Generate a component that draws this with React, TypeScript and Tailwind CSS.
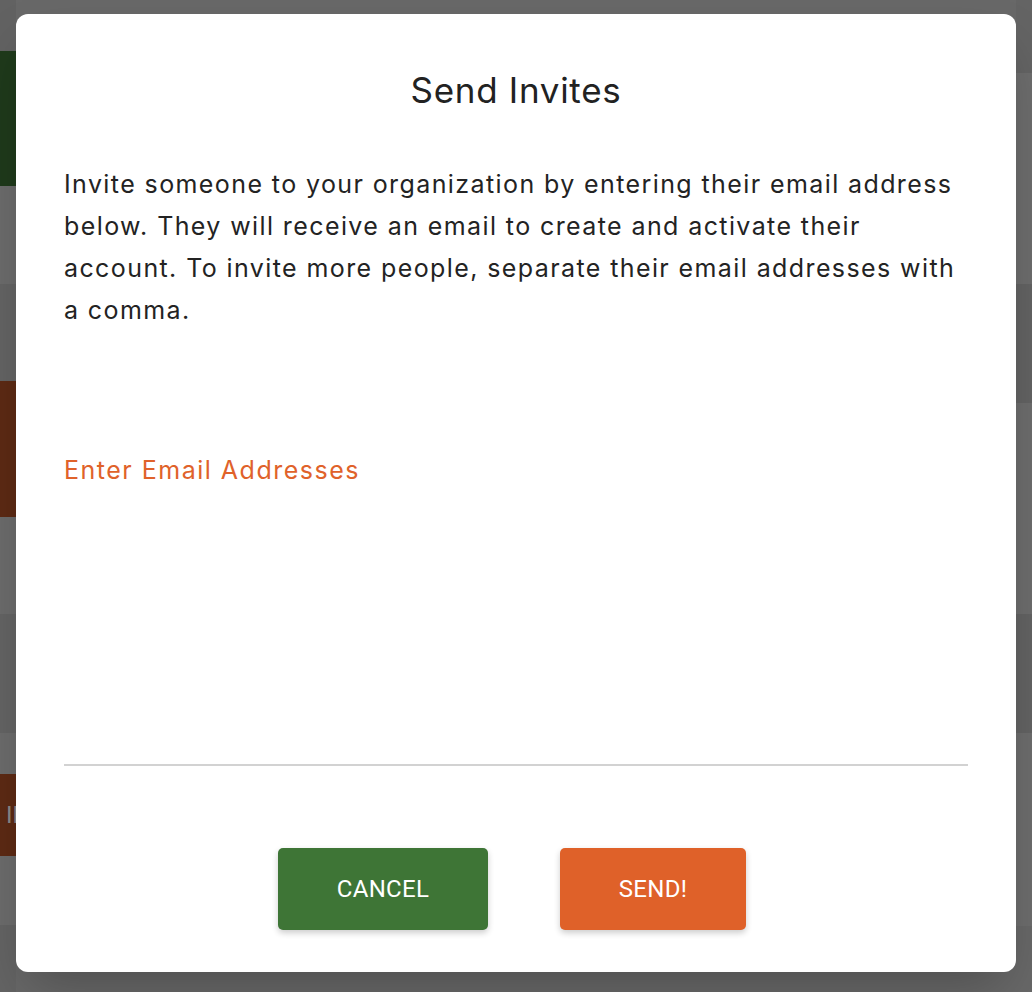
import React from "react";

const leftSegs: { h: number; c: string; text?: string }[] = [
  { h: 51, c: "bg-[#626262]" },
  { h: 135, c: "bg-[#1f3a1b]" },
  { h: 98, c: "bg-[#6c6c6c]" },
  { h: 97, c: "bg-[#646464]" },
  { h: 136, c: "bg-[#5d2a14]" },
  { h: 97, c: "bg-[#6c6c6c]" },
  { h: 119, c: "bg-[#646464]" },
  { h: 41, c: "bg-[#6c6c6c]" },
  { h: 82, c: "bg-[#5d2a14]", text: "INVITE" },
  { h: 69, c: "bg-[#6c6c6c]" },
  { h: 67, c: "bg-[#646464]" },
];

const rightSegs: { h: number; c: string }[] = [
  { h: 73, c: "bg-[#646464]" },
  { h: 211, c: "bg-[#6d6d6d]" },
  { h: 119, c: "bg-[#636363]" },
  { h: 211, c: "bg-[#6d6d6d]" },
  { h: 119, c: "bg-[#636363]" },
  { h: 193, c: "bg-[#6d6d6d]" },
  { h: 66, c: "bg-[#686868]" },
];

export default function App() {
  return (
    <div className="relative w-[1032px] h-[992px] overflow-hidden bg-[#686868]">
      {/* underlying page (dimmed) */}
      <div className="flex w-full h-full justify-between">
        <div className="flex flex-col w-[16px]">
          {leftSegs.map((s, i) => (
            <div
              key={i}
              className={`${s.c} shrink-0 overflow-hidden flex items-center`}
              style={{ height: s.h }}
            >
              {s.text && (
                <span className="pl-[6px] text-[24px] text-[#8a8a8a] whitespace-nowrap font-['Roboto',sans-serif]">
                  {s.text}
                </span>
              )}
            </div>
          ))}
        </div>
        <div className="flex flex-col w-[16px]">
          {rightSegs.map((s, i) => (
            <div key={i} className={`${s.c} shrink-0`} style={{ height: s.h }} />
          ))}
        </div>
      </div>

      {/* dialog */}
      <div className="absolute left-[16px] top-[14px] w-[1000px] h-[958px] bg-white rounded-[12px] shadow-2xl flex flex-col px-[48px] pt-[56px] pb-[42px] font-['Inter',sans-serif]">
        <h2 className="text-center text-[35px] leading-[40px] tracking-[0.7px] text-[#222222] font-normal">
          Send Invites
        </h2>
        <p className="mt-[53px] text-[25px] leading-[42px] tracking-[1.4px] text-[#232323] whitespace-nowrap">
          Invite someone to your organization by entering their email address
          <br />
          below. They will receive an email to create and activate their
          <br />
          account. To invite more people, separate their email addresses with
          <br />a comma.
        </p>
        <div className="mt-[124px] flex flex-col">
          <label className="text-[25px] leading-[30px] tracking-[1.5px] text-[#e0622a]">
            Enter Email Addresses
          </label>
          <div className="h-[279px]" />
          <div className="h-[2px] bg-[#d2d2d2]" />
        </div>
        <div className="mt-[82px] flex justify-center gap-[72px] pr-[8px] font-['Roboto',sans-serif]">
          <button className="h-[82px] w-[210px] rounded-[5px] bg-[#3e7536] text-white text-[24px] tracking-[0.3px] shadow-[0_3px_6px_rgba(0,0,0,0.2)]">
            CANCEL
          </button>
          <button className="h-[82px] w-[186px] rounded-[5px] bg-[#df6129] text-white text-[24px] tracking-[0.3px] shadow-[0_3px_6px_rgba(0,0,0,0.2)]">
            SEND!
          </button>
        </div>
      </div>
    </div>
  );
}
